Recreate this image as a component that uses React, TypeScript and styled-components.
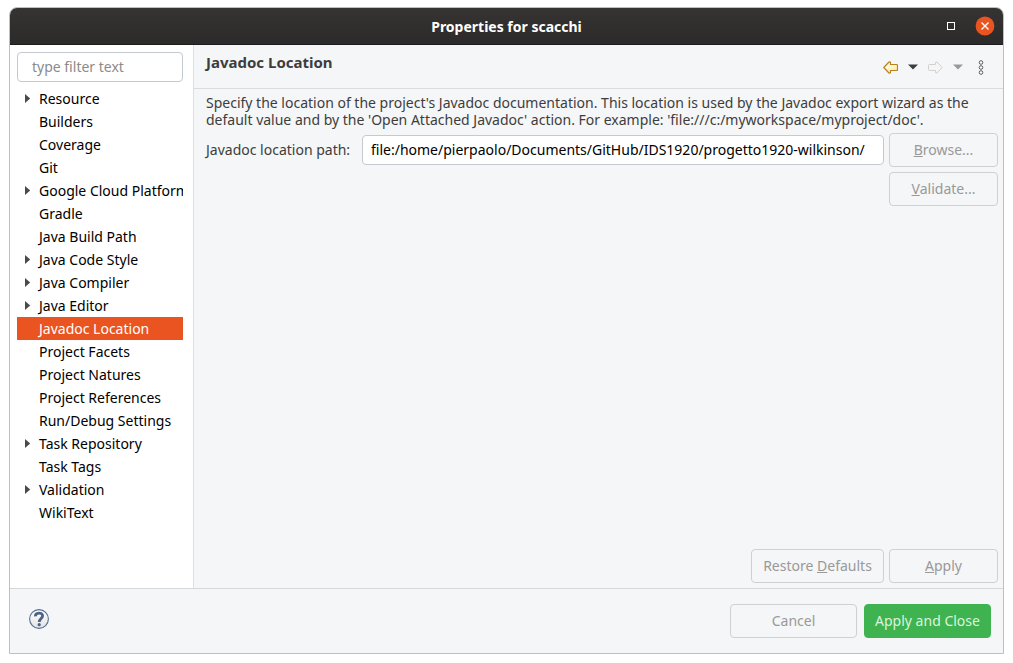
import React, { useState } from "react";
import styled, { createGlobalStyle, css } from "styled-components";

const GlobalStyle = createGlobalStyle`
  *, *::before, *::after { box-sizing: border-box; }
  body {
    margin: 0;
    background: #ffffff;
    color: #3d3d3d;
    font-family: "Noto Sans", "Open Sans", sans-serif;
    font-size: 14px;
    line-height: 17px;
  }
  button, input { font: inherit; color: inherit; }
`;

const Window = styled.div`
  display: flex;
  flex-direction: column;
  min-height: calc(100vh - 16px);
  margin: 7px 9px 9px;
  border: 1px solid #bfbfbf;
  border-radius: 8px 8px 0 0;
  background: #f5f6f7;
  overflow: hidden;
`;

const TitleBar = styled.header`
  display: grid;
  grid-template-columns: 1fr auto 1fr;
  align-items: center;
  height: 37px;
  padding: 0 8px;
  background: linear-gradient(#353432, #2c2a2a);
  border-bottom: 1px solid #1d1c1c;
  color: #ffffff;
`;

const WindowTitle = styled.h1`
  grid-column: 2;
  margin: 0;
  font-size: 14px;
  font-weight: 700;
`;

const WindowControls = styled.div`
  display: flex;
  justify-content: flex-end;
  align-items: center;
  gap: 20px;
`;

const IconButton = styled.button`
  display: flex;
  align-items: center;
  justify-content: center;
  padding: 0;
  border: 0;
  background: none;
  cursor: pointer;

  &:disabled { cursor: default; }
  svg { display: block; }
`;

const Main = styled.div`
  display: flex;
  flex: 1;
`;

const Sidebar = styled.nav`
  display: flex;
  flex-direction: column;
  gap: 5px;
  flex: 0 0 184px;
  min-width: 0;
  padding: 7px 10px 7px 7px;
  background: #ffffff;
  border-right: 1px solid #dcdfe3;
`;

const textBox = css`
  width: 100%;
  min-width: 0;
  height: 30px;
  border: 1px solid #c5c9d0;
  border-radius: 4px;
  background: #ffffff;
  outline: none;
`;

const FilterInput = styled.input`
  ${textBox}
  padding: 0 14px 2px;

  &::placeholder { color: #8b8b8b; opacity: 1; }
`;

const Tree = styled.ul`
  margin: 0;
  padding: 0;
  list-style: none;
`;

const TreeRow = styled.button<{ $selected: boolean }>`
  display: flex;
  align-items: center;
  width: 100%;
  height: 23px;
  padding: 0;
  border: 0;
  overflow: hidden;
  white-space: nowrap;
  text-align: left;
  background: ${(p) => (p.$selected ? "#e95420" : "transparent")};
  color: ${(p) => (p.$selected ? "#ffffff" : "#000000")};
`;

const ArrowSlot = styled.span`
  display: flex;
  flex: 0 0 22px;
  padding-left: 8px;
`;

const Page = styled.main`
  display: flex;
  flex-direction: column;
  flex: 1;
  min-width: 0;
`;

const PageHeader = styled.div`
  display: flex;
  justify-content: space-between;
  height: 44px;
  padding: 0 19px 0 12px;
  border-bottom: 1px solid #dadcdf;
`;

const PageTitle = styled.h2`
  margin: 0;
  padding-top: 9px;
  font-size: 15px;
  font-weight: 700;
`;

const Toolbar = styled.div`
  display: flex;
  align-items: center;
  gap: 10px;
  padding-top: 1px;
`;

const PageBody = styled.div`
  display: flex;
  flex-direction: column;
  flex: 1;
  padding: 5px 5px 5px 12px;
`;

const Description = styled.p`
  margin: 0 0 5px;
`;

const Form = styled.div`
  display: grid;
  grid-template-columns: minmax(151px, auto) 1fr 109px;
  align-items: center;
  gap: 5px;
`;

const PathLabel = styled.label`
  padding-bottom: 2px;
`;

const PathInput = styled.input`
  ${textBox}
  padding: 0 8px 2px;
  color: #000000;
`;

const Button = styled.button<{ $width: number; $primary?: boolean }>`
  width: ${(p) => p.$width}px;
  height: 34px;
  padding: 0 0 2px;
  border: 1px solid ${(p) => (p.$primary ? "#3eb34f" : "#cdd0d4")};
  border-radius: 4px;
  background: ${(p) => (p.$primary ? "#3eb34f" : "#f5f6f7")};
  color: ${(p) => (p.$primary ? "#dcf3df" : "#999999")};
  white-space: nowrap;
`;

const ValidateButton = styled(Button)`
  grid-column: 3;
`;

const PageActions = styled.div`
  display: flex;
  justify-content: flex-end;
  gap: 5px;
  margin-top: auto;
`;

const Footer = styled.footer`
  display: flex;
  align-items: center;
  gap: 7px;
  padding: 15px 12px 15px 19px;
  border-top: 1px solid #d6d7d9;
`;

const HelpButton = styled(IconButton)`
  margin-right: auto;
  margin-bottom: 4px;
`;

const ViewMenuButton = styled(IconButton)`
  margin-left: 5px;
`;

const Expander = () => (
  <svg width="6" height="10" viewBox="0 0 6 10" aria-hidden="true">
    <path d="M0 0 L5.2 4.5 L0 9 Z" fill="#4a4a4a" />
  </svg>
);

const Caret = ({ color }: { color: string }) => (
  <svg width="10" height="6" viewBox="0 0 10 6" aria-hidden="true">
    <path d="M0 0.5 H10 L5 5.5 Z" fill={color} />
  </svg>
);

const BackArrow = () => (
  <svg width="15" height="13" viewBox="0 0 15 13" aria-hidden="true">
    <defs>
      <linearGradient id="back" x1="0" y1="0" x2="1" y2="1">
        <stop offset="0" stopColor="#fff" />
        <stop offset="1" stopColor="#fbe9a0" />
      </linearGradient>
    </defs>
    <path
      d="M0.8 6.5 L6 1 Q7.5 0.5 7.5 2 V3.5 H13.5 Q14.5 3.5 14.5 4.5 V8.5 Q14.5 9.5 13.5 9.5 H7.5 V11 Q7.5 12.5 6 12 Z"
      fill="url(#back)"
      stroke="#b9821b"
      strokeWidth="1.2"
      strokeLinejoin="round"
    />
  </svg>
);

const ForwardArrow = () => (
  <svg width="15" height="13" viewBox="0 0 15 13" aria-hidden="true">
    <path
      d="M14.2 6.5 L9 1 Q7.5 0.5 7.5 2 V3.5 H1.5 Q0.5 3.5 0.5 4.5 V8.5 Q0.5 9.5 1.5 9.5 H7.5 V11 Q7.5 12.5 9 12 Z"
      fill="#f5f5f5"
      stroke="#d0d0d0"
      strokeLinejoin="round"
    />
  </svg>
);

const MenuDots = () => (
  <svg width="6" height="15" viewBox="0 0 6 15" fill="#fff" stroke="#5a5a5a" aria-hidden="true">
    <circle cx="3" cy="2.5" r="1.8" />
    <circle cx="3" cy="7.5" r="1.8" />
    <circle cx="3" cy="12.5" r="1.8" />
  </svg>
);

const MaximizeIcon = () => (
  <svg width="8" height="8" viewBox="0 0 8 8" aria-hidden="true">
    <rect x="0.5" y="0.5" width="7" height="7" fill="none" stroke="#fff" />
  </svg>
);

const CloseIcon = () => (
  <svg width="20" height="20" viewBox="0 0 20 20" aria-hidden="true">
    <circle cx="10" cy="10" r="9.4" fill="#e95420" />
    <path d="M6.5 6.5 L13.5 13.5 M13.5 6.5 L6.5 13.5" stroke="#fff" strokeWidth="1.4" />
  </svg>
);

const HelpIcon = () => (
  <svg width="20" height="20" viewBox="0 0 20 20" aria-hidden="true">
    <defs>
      <linearGradient id="help" x1="0" y1="0" x2="0" y2="1">
        <stop offset="0" stopColor="#fff" />
        <stop offset="1" stopColor="#e2e2e2" />
      </linearGradient>
    </defs>
    <circle cx="10" cy="10" r="9.4" fill="url(#help)" stroke="#586d93" strokeWidth="1.1" />
    <path
      d="M6.4 7.4 C6.2 3.2 13.6 3 13.6 6.8 C13.6 9.6 10.3 9.4 10.3 13"
      fill="none"
      stroke="#4c6288"
      strokeWidth="2.8"
    />
    <circle cx="10.2" cy="15.7" r="1.6" fill="#4c6288" />
  </svg>
);

const items: { name: string; expandable?: boolean }[] = [
  { name: "Resource", expandable: true },
  { name: "Builders" },
  { name: "Coverage" },
  { name: "Git" },
  { name: "Google Cloud Platform", expandable: true },
  { name: "Gradle" },
  { name: "Java Build Path" },
  { name: "Java Code Style", expandable: true },
  { name: "Java Compiler", expandable: true },
  { name: "Java Editor", expandable: true },
  { name: "Javadoc Location" },
  { name: "Project Facets" },
  { name: "Project Natures" },
  { name: "Project References" },
  { name: "Run/Debug Settings" },
  { name: "Task Repository", expandable: true },
  { name: "Task Tags" },
  { name: "Validation", expandable: true },
  { name: "WikiText" },
];

export default function App() {
  const [selected, setSelected] = useState("Javadoc Location");

  return (
    <>
      <GlobalStyle />
      <Window>
        <TitleBar>
          <WindowTitle>Properties for scacchi</WindowTitle>
          <WindowControls>
            <IconButton type="button" aria-label="Maximize">
              <MaximizeIcon />
            </IconButton>
            <IconButton type="button" aria-label="Close">
              <CloseIcon />
            </IconButton>
          </WindowControls>
        </TitleBar>

        <Main>
          <Sidebar aria-label="Property pages">
            <FilterInput type="text" placeholder="type filter text" aria-label="Filter" />
            <Tree>
              {items.map(({ name, expandable }) => (
                <li key={name}>
                  <TreeRow
                    type="button"
                    $selected={name === selected}
                    aria-current={name === selected ? "page" : undefined}
                    onClick={() => setSelected(name)}
                  >
                    <ArrowSlot>{expandable && <Expander />}</ArrowSlot>
                    {name}
                  </TreeRow>
                </li>
              ))}
            </Tree>
          </Sidebar>

          <Page>
            <PageHeader>
              <PageTitle>Javadoc Location</PageTitle>
              <Toolbar>
                <IconButton type="button" aria-label="Back"><BackArrow /></IconButton>
                <IconButton type="button" aria-label="Back history"><Caret color="#3d3d3d" /></IconButton>
                <IconButton type="button" aria-label="Forward" disabled><ForwardArrow /></IconButton>
                <IconButton type="button" aria-label="Forward history" disabled><Caret color="#999999" /></IconButton>
                <ViewMenuButton type="button" aria-label="View menu"><MenuDots /></ViewMenuButton>
              </Toolbar>
            </PageHeader>

            <PageBody>
              <Description>
                Specify the location of the project's Javadoc documentation. This location is used by
                the Javadoc export wizard as the default value and by the 'Open Attached Javadoc'
                action. For example: 'file:///c:/myworkspace/myproject/doc'.
              </Description>
              <Form>
                <PathLabel htmlFor="path"><u>J</u>avadoc location path:</PathLabel>
                <PathInput
                  id="path"
                  type="text"
                  defaultValue="file:/home/pierpaolo/Documents/GitHub/IDS1920/progetto1920-wilkinson/"
                />
                <Button type="button" $width={109}><u>B</u>rowse...</Button>
                <ValidateButton type="button" $width={109}><u>V</u>alidate...</ValidateButton>
              </Form>
              <PageActions>
                <Button type="button" $width={133}>Restore <u>D</u>efaults</Button>
                <Button type="button" $width={109}><u>A</u>pply</Button>
              </PageActions>
            </PageBody>
          </Page>
        </Main>

        <Footer>
          <HelpButton type="button" aria-label="Help"><HelpIcon /></HelpButton>
          <Button type="button" $width={127}>Cancel</Button>
          <Button type="button" $width={127} $primary>Apply and Close</Button>
        </Footer>
      </Window>
    </>
  );
}
